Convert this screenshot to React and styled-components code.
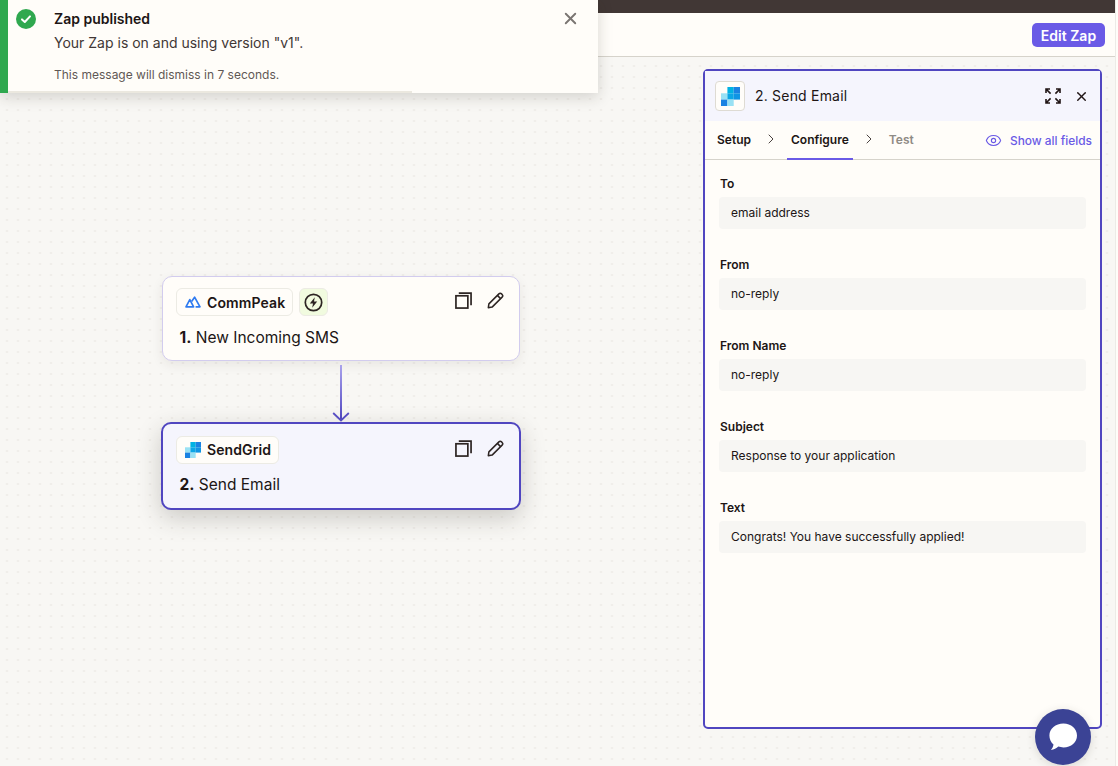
import React from 'react';
import styled, { createGlobalStyle } from 'styled-components';
import { X, Eye, ChevronRight } from 'lucide-react';

const FIELDS = [
  { label: 'To', value: 'email address' },
  { label: 'From', value: 'no-reply' },
  { label: 'From Name', value: 'no-reply' },
  { label: 'Subject', value: 'Response to your application' },
  { label: 'Text', value: 'Congrats! You have successfully applied!' },
];

const SendGridLogo = ({ size = 16 }) => (
  <svg width={size} height={size} viewBox="0 0 16 16">
    <rect x="0" y="5.3" width="5.4" height="5.3" fill="#99e1f4" />
    <rect x="0" y="10.6" width="5.4" height="5.4" fill="#1a82e2" />
    <rect x="5.4" y="5.3" width="5.3" height="5.3" fill="#0ba6e6" />
    <rect x="5.4" y="10.6" width="5.3" height="5.4" fill="#99e1f4" />
    <rect x="5.4" y="0" width="5.3" height="5.3" fill="#00b2e3" />
    <rect x="10.7" y="0" width="5.3" height="5.3" fill="#1a82e2" />
    <rect x="10.7" y="5.3" width="5.3" height="5.3" fill="#0f95e4" />
  </svg>
);

const CommPeakLogo = () => (
  <svg width="16" height="12" viewBox="0 0 16 12" fill="none" stroke="#2f7bf0" strokeWidth="1.7">
    <path d="M1 10.8 L4.8 3.6 L8.6 10.8 Z" strokeLinejoin="round" />
    <path d="M6.6 5.4 L9.6 1.2 L15 10.8 H10.6" strokeLinejoin="round" />
  </svg>
);

const CopyIcon = () => (
  <svg width="17" height="17" viewBox="0 0 18 18" fill="none" stroke="#2d2523" strokeWidth="1.8">
    <rect x="1" y="4" width="12.6" height="13" />
    <path d="M4 1.2 H17 V14" />
  </svg>
);

const PencilIcon = () => (
  <svg width="17" height="17" viewBox="0 0 18 18" fill="none" stroke="#2d2523" strokeWidth="1.6" strokeLinejoin="round">
    <path d="M1.4 16.6 L2 12.6 L12.6 2 C13.4 1.2 14.6 1.2 15.4 2 L16 2.6 C16.8 3.4 16.8 4.6 16 5.4 L5.4 16 Z" />
    <path d="M11 3.6 L14.4 7" />
  </svg>
);

const BoltIcon = () => (
  <svg width="19" height="19" viewBox="0 0 19 19" fill="none">
    <circle cx="9.5" cy="9.5" r="8.2" stroke="#2d2523" strokeWidth="1.7" />
    <path d="M10.8 4.2 L5.8 10.4 H9 L8.2 14.8 L13.2 8.6 H10 Z" fill="#2d2523" />
  </svg>
);

const ExpandIcon = () => (
  <svg width="16" height="16" viewBox="0 0 16 16" fill="none" stroke="#201515" strokeWidth="1.6">
    <path d="M1 5 V1 H5 M1 1 L5.6 5.6" />
    <path d="M11 1 H15 V5 M15 1 L10.4 5.6" />
    <path d="M1 11 V15 H5 M1 15 L5.6 10.4" />
    <path d="M11 15 H15 V11 M15 15 L10.4 10.4" />
  </svg>
);

const CheckIcon = () => (
  <svg width="20" height="20" viewBox="0 0 20 20">
    <circle cx="10" cy="10" r="10" fill="#2fa84f" />
    <path d="M6 10.4 L8.8 13 L14 7.4" fill="none" stroke="#fff" strokeWidth="2" strokeLinecap="round" strokeLinejoin="round" />
  </svg>
);

const ChatIcon = () => (
  <svg width="30" height="30" viewBox="0 0 30 30">
    <path d="M15.4 1.4 C23.2 1.4 29 6.6 29 13.4 C29 20.2 23.2 25.4 15.4 25.4 C13.6 25.4 11.9 25.1 10.3 24.6 C8.4 26.4 6 27.6 2.9 28 C4.3 26.4 5.2 24.6 5.5 22.4 C2.9 20.2 1.4 17 1.4 13.4 C1.4 6.6 7.6 1.4 15.4 1.4 Z" fill="#fff" />
  </svg>
);

const StepNode = ({ app, logo, number, title, selected, trigger }) => (
  <Node $selected={selected}>
    <NodeTop>
      <AppPill $selected={selected}>
        {logo}
        {app}
      </AppPill>
      {trigger && (
        <TriggerBadge>
          <BoltIcon />
        </TriggerBadge>
      )}
      <NodeActions>
        <CopyIcon />
        <PencilIcon />
      </NodeActions>
    </NodeTop>
    <NodeTitle $selected={selected}>
      <b>{number}.</b> {title}
    </NodeTitle>
  </Node>
);

const App = () => (
  <Page>
    <GlobalStyle />
    <TopStrip />
    <Header>
      <EditButton>Edit Zap</EditButton>
    </Header>
    <Canvas>
      <Diagram>
        <StepNode app="CommPeak" logo={<CommPeakLogo />} number={1} title="New Incoming SMS" trigger />
        <Connector width="18" height="57" viewBox="0 0 18 57" fill="none">
          <defs>
            <linearGradient id="line" x1="0" y1="0" x2="0" y2="1">
              <stop offset="0" stopColor="#aaa3ec" />
              <stop offset="1" stopColor="#5046c0" />
            </linearGradient>
          </defs>
          <rect x="8" y="0" width="2" height="55" fill="url(#line)" />
          <path d="M1.2 48 L9 55.4 L16.8 48" stroke="#5a50c8" strokeWidth="1.8" />
        </Connector>
        <StepNode app="SendGrid" logo={<SendGridLogo />} number={2} title="Send Email" selected />
      </Diagram>
      <Panel>
        <PanelHeader>
          <LogoBox>
            <SendGridLogo size={19} />
          </LogoBox>
          <PanelTitle>2. Send Email</PanelTitle>
          <HeaderActions>
            <ExpandIcon />
            <X size={15} color="#201515" strokeWidth={2.2} />
          </HeaderActions>
        </PanelHeader>
        <Tabs>
          <Tab>Setup</Tab>
          <TabChevron size={16} strokeWidth={1.5} />
          <Tab $active>Configure</Tab>
          <TabChevron size={16} strokeWidth={1.5} />
          <Tab $muted>Test</Tab>
          <ShowFields>
            <Eye size={17} strokeWidth={1.6} />
            Show all fields
          </ShowFields>
        </Tabs>
        <FieldList>
          {FIELDS.map((field) => (
            <Field key={field.label}>
              <FieldLabel>{field.label}</FieldLabel>
              <FieldValue>{field.value}</FieldValue>
            </Field>
          ))}
        </FieldList>
      </Panel>
    </Canvas>
    <Toast>
      <CheckIcon />
      <ToastBody>
        <ToastTitle>Zap published</ToastTitle>
        <ToastText>Your Zap is on and using version "v1".</ToastText>
        <ToastNote>This message will dismiss in 7 seconds.</ToastNote>
      </ToastBody>
      <ToastClose>
        <X size={19} strokeWidth={2.4} />
      </ToastClose>
      <ToastProgress />
    </Toast>
    <ChatButton>
      <ChatIcon />
    </ChatButton>
  </Page>
);

const GlobalStyle = createGlobalStyle`
  html, body {
    margin: 0;
    height: 100%;
    background: #fffdf9;
  }
  body {
    font-family: Inter, "Liberation Sans", sans-serif;
    color: #201515;
    overflow: hidden;
  }
  * {
    box-sizing: border-box;
  }
`;

const Page = styled.div`
  display: flex;
  flex-direction: column;
  position: relative;
  width: 1116px;
  height: 766px;
  border-right: 1px solid #ecebe7;
`;

const TopStrip = styled.div`
  height: 13px;
  background: #413735;
`;

const Header = styled.div`
  display: flex;
  align-items: flex-start;
  justify-content: flex-end;
  height: 44px;
  padding: 10px 10px 0 0;
  background: #fffdf9;
  border-bottom: 1px solid #d6d3cb;
`;

const EditButton = styled.button`
  height: 24px;
  width: 73px;
  padding: 0;
  border: 0;
  border-radius: 5px;
  background: #6a5ae6;
  color: #fff;
  font: 600 14px Inter, sans-serif;
`;

const Canvas = styled.div`
  flex: 1;
  display: flex;
  justify-content: flex-end;
  position: relative;
  padding: 12px 13px 37px 0;
  background-color: #f8f7f4;
  background-image: radial-gradient(ellipse 1.1px 0.8px at center, #dedbd4 60%, transparent 100%);
  background-size: 11px 11px;
  background-position: 1.5px 3.5px;
`;

const Diagram = styled.div`
  position: absolute;
  left: 161px;
  top: 219px;
  width: 360px;
  display: flex;
  flex-direction: column;
  align-items: center;
`;

const Node = styled.div`
  width: ${(p) => (p.$selected ? '360px' : '358px')};
  height: ${(p) => (p.$selected ? '88px' : '85px')};
  padding: ${(p) => (p.$selected ? '11.5px 13px' : '11px 13px')};
  border-radius: 10px;
  border: ${(p) => (p.$selected ? '2.5px solid #5046c0' : '1.5px solid #d2ccee')};
  background: ${(p) => (p.$selected ? '#f5f5fd' : '#fffdf9')};
  box-shadow: ${(p) =>
    p.$selected ? '0 8px 24px rgba(45, 40, 30, 0.22)' : '0 4px 12px rgba(45, 40, 30, 0.08)'};
`;

const NodeTop = styled.div`
  display: flex;
  align-items: center;
  gap: 6px;
  height: 28px;
`;

const AppPill = styled.div`
  display: flex;
  align-items: center;
  gap: 6px;
  height: 28px;
  padding: 0 7px 0 8px;
  border: 1px solid #ecebe4;
  border-radius: 6px;
  background: #fffdf9;
  font-size: 14px;
  font-weight: 600;
  letter-spacing: 0.1px;
  color: #201515;
`;

const TriggerBadge = styled.div`
  display: flex;
  align-items: center;
  justify-content: center;
  width: 29px;
  height: 28px;
  border: 1px solid #ecebe4;
  border-radius: 6px;
  background: #f1fbdf;
`;

const NodeActions = styled.div`
  display: flex;
  align-items: center;
  gap: 15px;
  margin-left: auto;
  margin-right: 2.5px;
  margin-top: -3px;
`;

const NodeTitle = styled.div`
  margin-top: ${(p) => (p.$selected ? '11px' : '12px')};
  margin-left: 3.5px;
  font-size: 15.5px;
  line-height: 20px;
  color: #201515;

  b {
    font-weight: 700;
  }
`;

const Connector = styled.svg`
  display: block;
  margin: 4px 0 0;
`;

const Panel = styled.div`
  display: flex;
  flex-direction: column;
  width: 399px;
  height: 660px;
  border: 2px solid #5046c0;
  border-radius: 5px;
  background: #fffdf9;
`;

const PanelHeader = styled.div`
  display: flex;
  align-items: center;
  height: 50px;
  padding: 0 11.5px 0 10px;
  background: #f5f5fd;
`;

const HeaderActions = styled.div`
  display: flex;
  align-items: center;
  gap: 12.5px;
`;

const LogoBox = styled.div`
  display: flex;
  align-items: center;
  justify-content: center;
  width: 30px;
  height: 30px;
  border: 1px solid #dedbd3;
  border-radius: 4px;
  background: #fffdf9;
`;

const PanelTitle = styled.div`
  flex: 1;
  margin-left: 10px;
  margin-bottom: 1px;
  font-size: 14px;
  font-weight: 400;
  letter-spacing: 0.2px;
`;

const Tabs = styled.div`
  display: flex;
  align-items: stretch;
  height: 39px;
  padding: 0 8px 0 8px;
  border-bottom: 1px solid #d6d3cb;
`;

const Tab = styled.div`
  display: flex;
  align-items: center;
  padding: 0 4px;
  margin-bottom: -1px;
  font-size: 12px;
  font-weight: 600;
  color: ${(p) => (p.$muted ? '#8f8b85' : '#201515')};
  border-bottom: 2px solid ${(p) => (p.$active ? '#6a5ae6' : 'transparent')};
`;

const TabChevron = styled(ChevronRight)`
  align-self: center;
  margin: -2px 8px 0 8px;
  color: #4a4240;
`;

const ShowFields = styled.div`
  display: flex;
  align-items: center;
  gap: 8px;
  margin-left: auto;
  font-size: 11.9px;
  font-weight: 500;
  color: #6a5ae6;
`;

const FieldList = styled.div`
  display: flex;
  flex-direction: column;
  gap: 28px;
  padding: 16px 14px;
`;

const Field = styled.div`
  display: flex;
  flex-direction: column;
  gap: 5px;
`;

const FieldLabel = styled.div`
  padding-left: 1px;
  font-size: 12px;
  line-height: 16px;
  font-weight: 600;
`;

const FieldValue = styled.div`
  display: flex;
  align-items: center;
  height: 32px;
  padding: 0 12px 2px;
  border-radius: 4px;
  background: #f7f6f3;
  font-size: 12px;
  color: #201515;
`;

const Toast = styled.div`
  position: absolute;
  left: 0;
  top: 0;
  display: flex;
  align-items: flex-start;
  gap: 18px;
  width: 598px;
  height: 93px;
  padding: 9px 0 0 8px;
  background: #fffdf9;
  border-left: 8px solid #2fa84f;
  box-shadow: 0 4px 14px rgba(45, 40, 30, 0.18);
`;

const ToastBody = styled.div`
  flex: 1;
  display: flex;
  flex-direction: column;
`;

const ToastTitle = styled.div`
  font-size: 14px;
  line-height: 20px;
  font-weight: 600;
`;

const ToastText = styled.div`
  margin-top: 4px;
  font-size: 14px;
  line-height: 20px;
  color: #413735;
`;

const ToastNote = styled.div`
  margin-top: 14px;
  font-size: 12px;
  line-height: 16px;
  color: #5f5855;
`;

const ToastClose = styled.div`
  margin: 0 18px 0 0;
  color: #7a7572;
  line-height: 0;
`;

const ToastProgress = styled.div`
  position: absolute;
  left: 0;
  bottom: 0;
  width: 404px;
  height: 2px;
  background: #ebe8df;
`;

const ChatButton = styled.div`
  position: absolute;
  left: 1035px;
  top: 709px;
  display: flex;
  align-items: center;
  justify-content: center;
  width: 56px;
  height: 56px;
  border-radius: 50%;
  background: #3b4395;
  box-shadow: 0 2px 10px rgba(45, 40, 30, 0.15);
`;

export default App;
